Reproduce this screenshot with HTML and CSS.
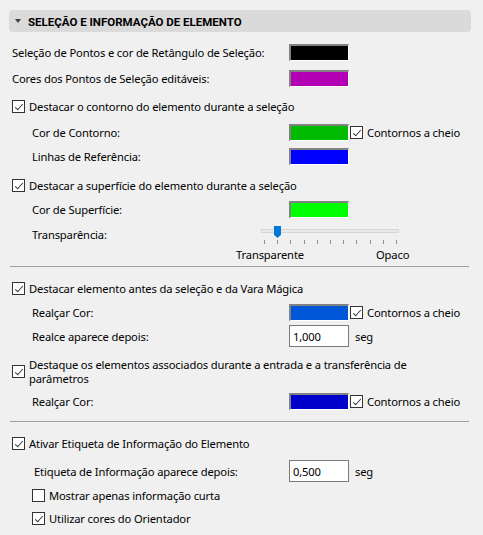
FILE: index.html
```html
<!DOCTYPE html>
<html lang="pt">
<head>
<meta charset="utf-8">
<title>Seleção e Informação de Elemento</title>
<link rel="stylesheet" href="styles.css">
</head>
<body>
<div class="panel">
  <div class="header"><span class="tri"></span><span>SELEÇÃO E INFORMAÇÃO DE ELEMENTO</span></div>

  <div class="row mt9"><span class="label">Seleção de Pontos e cor de Retângulo de Seleção:</span><span class="swatch black"></span></div>
  <div class="row mt3"><span class="label">Cores dos Pontos de Seleção editáveis:</span><span class="swatch magenta"></span></div>

  <div class="row mt5"><label class="check"><span class="cb on"></span><span>Destacar o contorno do elemento durante a seleção</span></label></div>
  <div class="row sub mt3"><span class="label">Cor de Contorno:</span><span class="swatch green"></span><label class="check side"><span class="cb on"></span><span>Contornos a cheio</span></label></div>
  <div class="row sub mt1"><span class="label">Linhas de Referência:</span><span class="swatch blue"></span></div>

  <div class="row mt6"><label class="check"><span class="cb on"></span><span>Destacar a superfície do elemento durante a seleção</span></label></div>
  <div class="row sub mt1"><span class="label">Cor de Superfície:</span><span class="swatch lime"></span></div>
  <div class="row sub slider-row mt1"><span class="label short">Transparência:</span>
    <div class="slider">
      <div class="track"><span class="thumb"></span></div>
      <div class="ticks"><span></span><span></span><span></span><span></span><span></span><span></span><span></span><span></span><span></span><span></span><span></span></div>
    </div>
  </div>
  <div class="scale"><span class="lo">Transparente</span><span>Opaco</span></div>

  <div class="sep"></div>

  <div class="row mt10"><label class="check"><span class="cb on"></span><span>Destacar elemento antes da seleção e da Vara Mágica</span></label></div>
  <div class="row sub mt1"><span class="label">Realçar Cor:</span><span class="swatch royal"></span><label class="check side"><span class="cb on"></span><span>Contornos a cheio</span></label></div>
  <div class="row sub tall"><span class="label">Realce aparece depois:</span><span class="field">1,000</span><span class="unit">seg</span></div>

  <div class="row multi mt10"><label class="check"><span class="cb on"></span><span class="wrap">Destaque os elementos associados durante a entrada e a transferência de<br>parâmetros</span></label></div>
  <div class="row sub mt5"><span class="label">Realçar Cor:</span><span class="swatch navy"></span><label class="check side"><span class="cb on"></span><span>Contornos a cheio</span></label></div>

  <div class="sep sep2"></div>

  <div class="row mt10"><label class="check"><span class="cb on"></span><span>Ativar Etiqueta de Informação do Elemento</span></label></div>
  <div class="row sub2 tall mt4"><span class="label">Etiqueta de Informação aparece depois:</span><span class="field">0,500</span><span class="unit">seg</span></div>
  <div class="row sub mt1"><label class="check"><span class="cb"></span><span>Mostrar apenas informação curta</span></label></div>
  <div class="row sub"><label class="check"><span class="cb on"></span><span>Utilizar cores do Orientador</span></label></div>
</div>
</body>
</html>
```

FILE: styles.css
```css
* { box-sizing: border-box; }

html, body {
  margin: 0;
  background: #f0f0f0;
}

body {
  font-family: "Noto Sans", "Open Sans", sans-serif;
  font-size: 11.2px;
  letter-spacing: -0.15px;
  color: #000;
  height: 535px;
  overflow: hidden;
}

.panel {
  margin: 0 12px 0 9px;
  padding-top: 10px;
}

.header {
  height: 22px;
  background: #dadada;
  border-radius: 4px;
  display: flex;
  align-items: center;
  padding-left: 6px;
  font-family: Roboto, "Noto Sans", sans-serif;
  font-weight: 700;
  font-size: 11.5px;
  letter-spacing: 0;
  padding-top: 1px;
}

.tri {
  width: 0;
  height: 0;
  border-left: 3.5px solid transparent;
  border-right: 3.5px solid transparent;
  border-top: 4px solid #404040;
  margin-right: 7px;
  margin-top: -2px;
}

.row {
  display: flex;
  align-items: center;
  height: 23px;
  padding-left: 3px;
}

.row .label { width: 277px; flex: none; white-space: nowrap; }
.row.sub { padding-left: 23px; }
.row.sub .label { width: 257px; }
.row.sub2 { padding-left: 25px; }
.row.sub2 .label { width: 255px; }
.row.tall { height: 24px; }
.row.multi { height: 27px; }

.mt1 { margin-top: 1px; }
.mt3 { margin-top: 3px; }
.mt4 { margin-top: 4px; }
.mt5 { margin-top: 5px; }
.mt6 { margin-top: 6px; }
.mt9 { margin-top: 9px; }
.mt10 { margin-top: 10px; }

.swatch {
  flex: none;
  width: 60px;
  height: 17px;
  border-style: solid;
  border-width: 2px 1px 1px 2px;
  border-color: #828282 #ffffff #ffffff #828282;
}
.black { background: #000000; }
.magenta { background: #b400b4; }
.green { background: #00bb00; }
.blue { background: #0000ff; }
.lime { background: #00ff00; }
.royal { background: #0058d8; }
.navy { background: #0000cc; }

.check {
  display: flex;
  align-items: center;
  gap: 4px;
  white-space: nowrap;
}
.check.side { margin-left: 1px; gap: 4px; }

.cb {
  flex: none;
  width: 13px;
  height: 13px;
  border: 1px solid #333333;
  background: #ffffff;
  position: relative;
}
.cb.on::after {
  content: "";
  position: absolute;
  left: 3.5px;
  top: 1px;
  width: 3px;
  height: 7px;
  border: solid #333333;
  border-width: 0 1px 1px 0;
  transform: rotate(42deg);
}

.wrap { line-height: 13.5px; }

.field {
  flex: none;
  width: 60px;
  height: 22px;
  background: #ffffff;
  border: 1px solid #7a7a7a;
  padding-left: 3px;
  display: flex;
  align-items: center;
}
.unit { margin-left: 6px; }

.slider-row { height: 24px; }
.slider-row .label.short { width: 229px; }

.slider {
  align-self: flex-start;
  padding-top: 7px;
  width: 138px;
}
.track {
  height: 4px;
  background: #e7e7e7;
  border: 1px solid #d6d6d6;
  position: relative;
}
.thumb {
  position: absolute;
  left: 12px;
  top: -4px;
  width: 7px;
  height: 12px;
  background: #0078d7;
  clip-path: polygon(0 0, 100% 0, 100% 72%, 50% 100%, 0 72%);
}
.ticks {
  display: flex;
  justify-content: space-between;
  height: 4px;
  margin: 7px 2px 0 3px;
}
.ticks span {
  width: 1px;
  height: 4px;
  background: #8d8d8d;
}

.scale {
  display: flex;
  align-items: center;
  height: 16px;
  padding-left: 227px;
}
.scale .lo { width: 140px; }

.sep {
  height: 1px;
  background: #a0a0a0;
  margin: 4px 2px 0 1px;
}
.sep.sep2 { margin-top: 8px; }
```
